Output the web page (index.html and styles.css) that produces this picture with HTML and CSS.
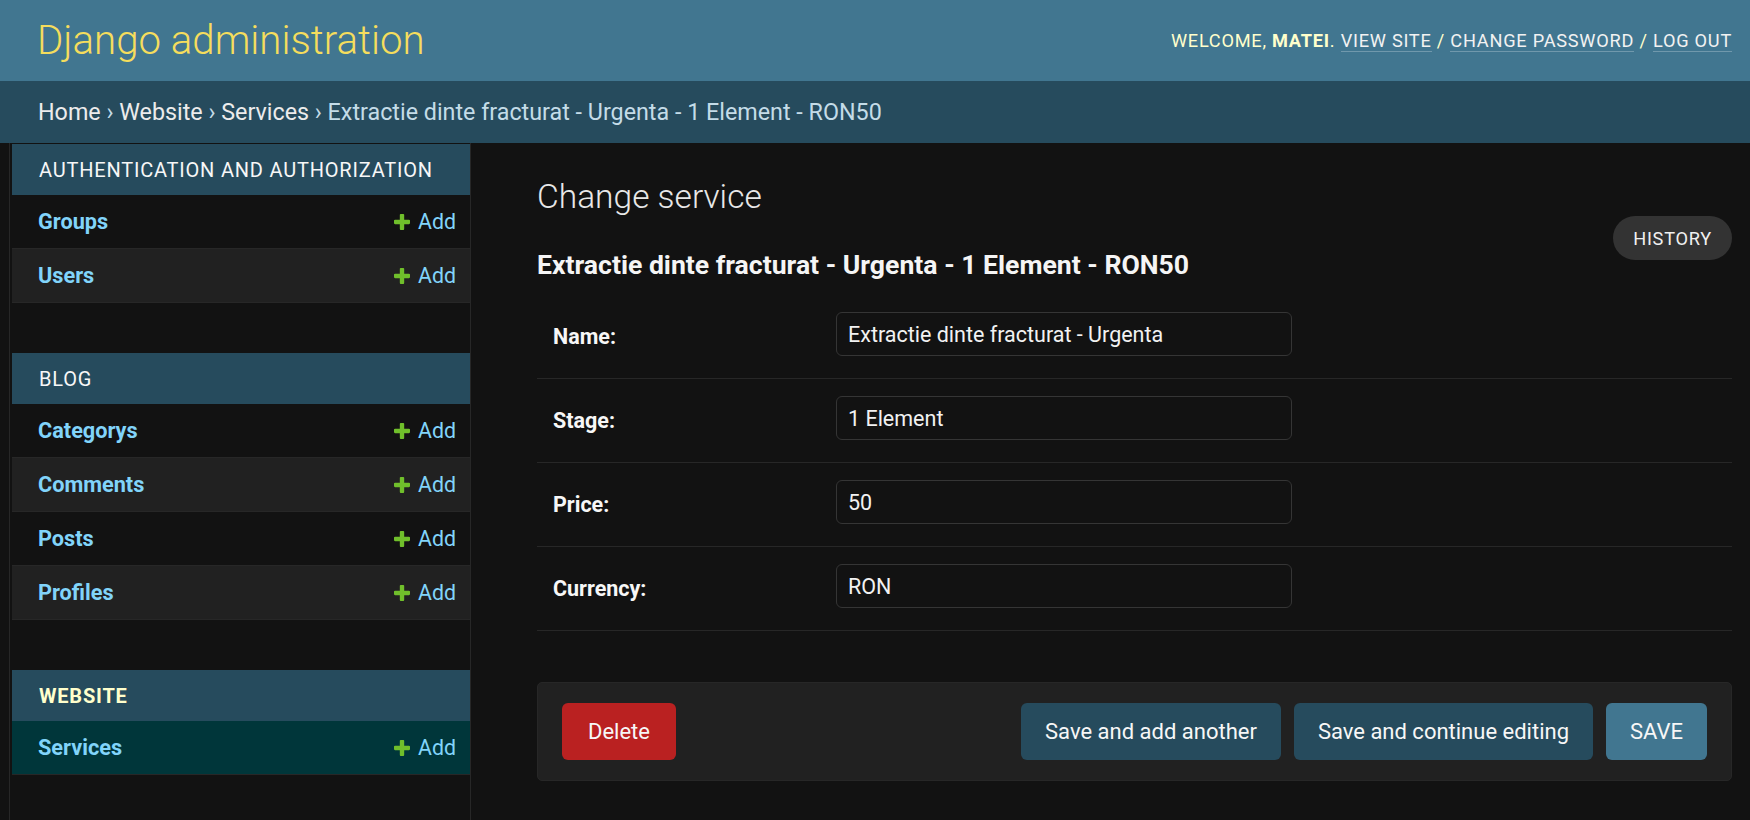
FILE: index.html
```html
<!DOCTYPE html>
<html lang="en">
<head>
<meta charset="utf-8">
<title>Change service | Django site admin</title>
<link rel="stylesheet" href="styles.css">
</head>
<body>
<header class="header">
  <div class="site-name">Django administration</div>
  <div class="user-tools">Welcome, <strong>matei</strong>. <a href="#">View site</a> / <a href="#">Change password</a> / <a href="#">Log out</a></div>
</header>
<div class="breadcrumbs"><a href="#">Home</a>&nbsp;›&nbsp;<a href="#">Website</a>&nbsp;›&nbsp;<a href="#">Services</a>&nbsp;›&nbsp;Extractie dinte fracturat - Urgenta - 1 Element - RON50</div>
<div class="main">
  <div class="toggle"></div>
  <nav class="sidebar">
    <div class="module">
      <div class="caption">Authentication and Authorization</div>
      <div class="row"><a class="model" href="#">Groups</a><a class="add" href="#"><svg viewBox="192 192 1408 1408" width="16" height="16"><path fill="#70bf2b" d="M1600 796v192q0 40-28 68t-68 28h-416v416q0 40-28 68t-68 28h-192q-40 0-68-28t-28-68v-416h-416q-40 0-68-28t-28-68v-192q0-40 28-68t68-28h416v-416q0-40 28-68t68-28h192q40 0 68 28t28 68v416h416q40 0 68 28t28 68z"/></svg>Add</a></div>
      <div class="row alt"><a class="model" href="#">Users</a><a class="add" href="#"><svg viewBox="192 192 1408 1408" width="16" height="16"><path fill="#70bf2b" d="M1600 796v192q0 40-28 68t-68 28h-416v416q0 40-28 68t-68 28h-192q-40 0-68-28t-28-68v-416h-416q-40 0-68-28t-28-68v-192q0-40 28-68t68-28h416v-416q0-40 28-68t68-28h192q40 0 68 28t28 68v416h416q40 0 68 28t28 68z"/></svg>Add</a></div>
    </div>
    <div class="module">
      <div class="caption">Blog</div>
      <div class="row"><a class="model" href="#">Categorys</a><a class="add" href="#"><svg viewBox="192 192 1408 1408" width="16" height="16"><path fill="#70bf2b" d="M1600 796v192q0 40-28 68t-68 28h-416v416q0 40-28 68t-68 28h-192q-40 0-68-28t-28-68v-416h-416q-40 0-68-28t-28-68v-192q0-40 28-68t68-28h416v-416q0-40 28-68t68-28h192q40 0 68 28t28 68v416h416q40 0 68 28t28 68z"/></svg>Add</a></div>
      <div class="row alt"><a class="model" href="#">Comments</a><a class="add" href="#"><svg viewBox="192 192 1408 1408" width="16" height="16"><path fill="#70bf2b" d="M1600 796v192q0 40-28 68t-68 28h-416v416q0 40-28 68t-68 28h-192q-40 0-68-28t-28-68v-416h-416q-40 0-68-28t-28-68v-192q0-40 28-68t68-28h416v-416q0-40 28-68t68-28h192q40 0 68 28t28 68v416h416q40 0 68 28t28 68z"/></svg>Add</a></div>
      <div class="row"><a class="model" href="#">Posts</a><a class="add" href="#"><svg viewBox="192 192 1408 1408" width="16" height="16"><path fill="#70bf2b" d="M1600 796v192q0 40-28 68t-68 28h-416v416q0 40-28 68t-68 28h-192q-40 0-68-28t-28-68v-416h-416q-40 0-68-28t-28-68v-192q0-40 28-68t68-28h416v-416q0-40 28-68t68-28h192q40 0 68 28t28 68v416h416q40 0 68 28t28 68z"/></svg>Add</a></div>
      <div class="row alt"><a class="model" href="#">Profiles</a><a class="add" href="#"><svg viewBox="192 192 1408 1408" width="16" height="16"><path fill="#70bf2b" d="M1600 796v192q0 40-28 68t-68 28h-416v416q0 40-28 68t-68 28h-192q-40 0-68-28t-28-68v-416h-416q-40 0-68-28t-28-68v-192q0-40 28-68t68-28h416v-416q0-40 28-68t68-28h192q40 0 68 28t28 68v416h416q40 0 68 28t28 68z"/></svg>Add</a></div>
    </div>
    <div class="module current">
      <div class="caption">Website</div>
      <div class="row selected"><a class="model" href="#">Services</a><a class="add" href="#"><svg viewBox="192 192 1408 1408" width="16" height="16"><path fill="#70bf2b" d="M1600 796v192q0 40-28 68t-68 28h-416v416q0 40-28 68t-68 28h-192q-40 0-68-28t-28-68v-416h-416q-40 0-68-28t-28-68v-192q0-40 28-68t68-28h416v-416q0-40 28-68t68-28h192q40 0 68 28t28 68v416h416q40 0 68 28t28 68z"/></svg>Add</a></div>
    </div>
  </nav>
  <div class="content">
    <div class="content-head">
      <div class="titles">
        <h1>Change service</h1>
        <h2>Extractie dinte fracturat - Urgenta - 1 Element - RON50</h2>
      </div>
      <a class="history" href="#">History</a>
    </div>
    <form class="form">
      <div class="form-row"><label>Name:</label><input class="field" type="text" value="Extractie dinte fracturat - Urgenta"></div>
      <div class="form-row"><label>Stage:</label><input class="field" type="text" value="1 Element"></div>
      <div class="form-row"><label>Price:</label><input class="field" type="text" value="50"></div>
      <div class="form-row"><label>Currency:</label><input class="field" type="text" value="RON"></div>
      <div class="submit-row">
        <a class="btn delete" href="#">Delete</a>
        <div class="spacer"></div>
        <span class="btn">Save and add another</span>
        <span class="btn">Save and continue editing</span>
        <span class="btn default">SAVE</span>
      </div>
    </form>
  </div>
</div>
</body>
</html>
```
FILE: styles.css
```css
* { box-sizing: border-box; }
body {
  margin: 0;
  background: #121212;
  color: #eeeeee;
  font-family: Roboto, "Liberation Sans", sans-serif;
  font-size: 21px;
}
a { text-decoration: none; }

.header {
  height: 81px;
  background: #417690;
  display: flex;
  align-items: center;
  justify-content: space-between;
  padding: 1px 18px 0 37px;
}
.site-name {
  font-size: 40.2px;
  font-weight: 300;
  color: #f5dd5d;
  line-height: 1;
}
.user-tools {
  font-size: 18.2px;
  letter-spacing: 0.75px;
  text-transform: uppercase;
  color: #ffffcc;
  line-height: 1.2;
}
.user-tools strong { font-weight: 700; }
.user-tools a {
  color: #f2f2f2;
  border-bottom: 1px solid rgba(255, 255, 255, 0.25);
}

.breadcrumbs {
  height: 62px;
  background: #264b5d;
  color: #c4dce8;
  display: flex;
  align-items: center;
  padding-left: 38px;
  font-size: 23.3px;
}
.breadcrumbs a { color: #ececec; }

.main {
  display: flex;
  min-height: 677px;
}
.toggle {
  flex: 0 0 10px;
  border-right: 1px solid #272727;
}
.sidebar {
  flex: 0 0 459px;
  margin-left: 2px;
  padding-top: 1px;
  border-right: 1px solid #272727;
}
.module { margin-bottom: 50px; }
.caption {
  height: 51px;
  display: flex;
  align-items: center;
  padding-left: 27px;
  background: #264b5d;
  color: #f7f7f7;
  font-size: 20px;
  letter-spacing: 0.8px;
  text-transform: uppercase;
}
.current .caption {
  color: #ffffcc;
  font-weight: 700;
}
.row {
  height: 54px;
  display: flex;
  align-items: center;
  justify-content: space-between;
  padding: 0 14px 0 26px;
  border-bottom: 1px solid #272727;
  background: #121212;
}
.row.alt { background: #212121; }
.row.selected { background: #00363a; }
.model {
  color: #81d4fa;
  font-weight: 700;
  font-size: 21.7px;
}
.add {
  color: #81d4fa;
  display: flex;
  align-items: center;
  font-size: 21.3px;
}
.add svg { margin-right: 8px; }

.content {
  flex: 1;
  padding: 34px 18px 0 66px;
}
.content-head {
  display: flex;
  justify-content: space-between;
  align-items: flex-start;
}
h1 {
  margin: 0;
  font-size: 33.5px;
  line-height: 40px;
  font-weight: 300;
  color: #e8e8e8;
}
h2 {
  margin: 33px 0 15px;
  font-size: 26.6px;
  line-height: 30px;
  font-weight: 700;
  color: #f5f5f5;
}
.history {
  margin-top: 39px;
  height: 44px;
  display: flex;
  align-items: center;
  padding: 0 20px;
  border-radius: 22px;
  background: #333333;
  color: #f0f0f0;
  font-size: 18.2px;
  letter-spacing: 0.75px;
  text-transform: uppercase;
}

.form-row {
  display: flex;
  align-items: flex-start;
  padding: 17px 16px 22px;
  border-bottom: 1px solid #272727;
}
.form-row label {
  flex: 0 0 283px;
  height: 44px;
  line-height: 44px;
  padding-top: 3px;
  font-weight: 700;
  font-size: 21.5px;
  color: #f7f7f7;
}
.field {
  width: 456px;
  height: 44px;
  margin: 0;
  padding: 0 11px;
  background: #121212;
  border: 1px solid #353535;
  border-radius: 6px;
  color: #f2f2f2;
  font-family: Roboto, "Liberation Sans", sans-serif;
  font-size: 21.5px;
}

.submit-row {
  margin-top: 51px;
  display: flex;
  align-items: center;
  gap: 13px;
  padding: 20px 24px;
  background: #212121;
  border: 1px solid #272727;
  border-radius: 5px;
}
.spacer { flex: 1; }
.btn {
  height: 57px;
  display: flex;
  align-items: center;
  padding: 0 24px;
  border-radius: 6px;
  background: #264b5d;
  color: #f7f7f7;
  font-size: 22px;
}
.btn.delete {
  background: #ba2121;
  padding: 0 26px;
}
.btn.default { background: #417690; }
```
